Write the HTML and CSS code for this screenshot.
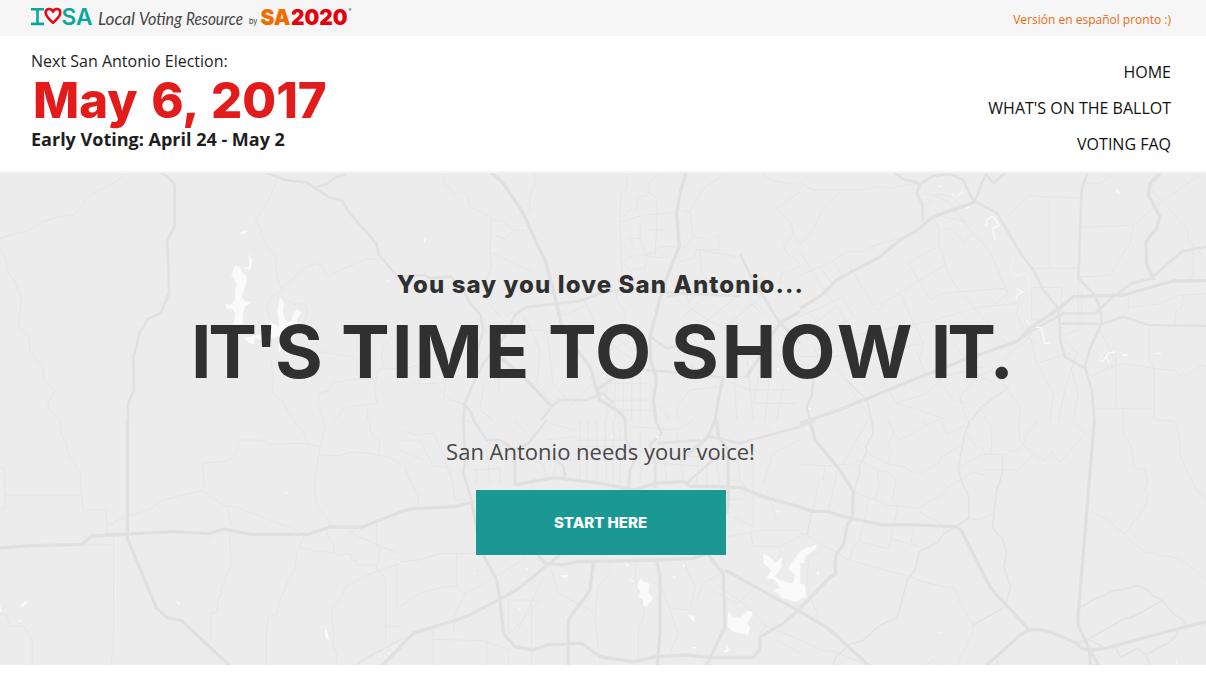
FILE: index.html
```html
<!DOCTYPE html>
<html lang="en">
<head>
<meta charset="utf-8">
<title>I Love SA Local Voting Resource</title>
<link rel="stylesheet" href="styles.css">
</head>
<body>
<div class="topbar">
  <svg class="logo" viewBox="30 4 324 30" width="324" height="30" role="img" aria-label="I love SA Local Voting Resource by SA2020">
    <path class="logo-i" d="M31 10.300H44M37.500 10.300V24.900M31 24.900H44"/>
    <path class="logo-heart" d="M53 23.800C49 20 45.700 17.500 45.700 13.800C45.700 9.400 51 8.700 53 12.600C55 8.700 60.300 9.400 60.300 13.800C60.300 17.500 57 20 53 23.800Z"/>
    <text class="logo-sa" x="61.500" y="25.800" textLength="31" lengthAdjust="spacingAndGlyphs">SA</text>
    <text class="logo-script" x="98" y="25.800" textLength="37" lengthAdjust="spacingAndGlyphs">Local</text>
    <text class="logo-script" x="139" y="25.800" textLength="43" lengthAdjust="spacingAndGlyphs">Voting</text>
    <text class="logo-script" x="186" y="25.800" textLength="57" lengthAdjust="spacingAndGlyphs">Resource</text>
    <text class="logo-by" x="249" y="25.200" textLength="8.500" lengthAdjust="spacingAndGlyphs">by</text>
    <text class="logo-org" x="260.500" y="25.800" textLength="30" lengthAdjust="spacingAndGlyphs">SA</text>
    <text class="logo-year" x="291" y="25.800" textLength="56.500" lengthAdjust="spacingAndGlyphs">2020</text>
    <text class="logo-reg" x="348.500" y="13">®</text>
  </svg>
  <a class="lang">Versión en español pronto :)</a>
</div>
<header class="header">
  <div class="election">
    <div class="election-label">Next San Antonio Election:</div>
    <div class="election-date">May 6, 2017</div>
    <div class="election-early">Early Voting: April 24 - May 2</div>
  </div>
  <nav class="nav">
    <a>HOME</a>
    <a>WHAT'S ON THE BALLOT</a>
    <a>VOTING FAQ</a>
  </nav>
</header>
<main class="hero">
  <svg class="map" viewBox="0 173 1206 492" aria-hidden="true">
    <!-- north west -->
    <g transform="translate(0 170) scale(.33333)">
      <path class="street" d="M372 10L360 25L322 50L280 68L258 90L240 118L220 136L185 138L125 156L85 182L20 198L0 206M0 240L18 268L22 305L42 330L65 385L55 465L88 508L92 545L128 590L132 628L165 662L142 700L150 722L183 750M833 25L805 92L765 152L782 178L790 210L827 265L830 320L845 357L915 293L950 280L968 290L980 320L1098 266L1140 270M845 357L812 385L800 418L812 450M845 380L880 402L915 402L922 435L900 470M812 570L820 610L818 670L843 690L880 750M960 545L1060 560L1075 575M970 750L953 700L957 670L985 662L1000 638L1060 628L1125 625M1135 598L1200 595M1135 598L1122 660L1132 700L1030 712L1020 735L995 750M1180 498L1150 530L1145 560L1152 595M1103 750L1103 715"/>
      <path class="road" d="M485 8L508 25L524 46V170L502 210L508 368L482 430L445 446L418 488L410 528L400 560L402 660L384 700V750M800 8L855 30L920 38L990 83L1025 90L1048 128L1130 222L1137 255L1195 322M948 52L980 42L1010 20L1040 12"/>
      <path class="water" d="M706 286L718 290L725 306L740 318L736 350L724 380L735 394L757 395L735 410L728 430L728 462L700 465L706 430L696 416L680 416L678 402L690 405L706 390L704 365L710 345L700 320L693 318ZM746 250L757 272L750 300L728 292L748 292ZM840 380L852 400L848 430L860 458L875 452L878 432L892 416L906 430L892 445L890 470L850 540L835 545L840 500L780 510L765 500L760 525L728 505L785 492L810 455L838 470L832 420ZM720 192L733 182L742 184L730 192ZM1156 333L1168 331L1166 336Z"/>
    </g>
    <!-- north -->
    <g transform="translate(400 170) scale(.33333)">
      <path class="street" d="M128 10L132 38L165 72L190 68L205 82L208 110L240 125L275 142L270 245L275 290L250 350M405 10L405 40L388 80L390 128M275 150L305 152L345 182L375 180M345 182L312 205L285 195M275 248L340 280L395 305M680 10V55L662 72L660 150L664 280L670 330M662 155L730 135L830 128M672 140L685 120L710 120L715 78L735 80L752 65L742 45L775 15M740 66L768 80L772 128L765 260M668 275L710 252L765 262L800 262M668 275L690 300L735 295L740 265M700 225L690 205L720 205L738 255L765 245L780 230L830 230M720 205V160M970 15L910 55L870 125L850 122M870 125L880 200L850 235M880 200L935 208L955 195L957 240L890 238L885 262L840 275M890 238L1020 262L1040 285L1052 318L1090 330L1140 338L1145 310L1200 290M1085 10L1115 30L1160 40L1200 38M1200 65L1130 115L1175 165L1180 195L1150 225L1160 250L1200 280M1180 195L1200 220M898 240L905 300L950 380M280 355L270 405L300 440M640 345L655 400L680 430L672 448M640 345L555 392L580 450M780 330L830 390L910 440L980 480M810 300L870 400M850 440L950 350L1010 345M900 470L1010 380L1090 320M940 500L1080 385M860 400L930 330M980 480L1050 400L1090 430M1010 345L1110 440M745 180L800 180M315 440L345 420L375 450M240 450L300 560L295 660M370 430L420 540L410 640L460 710M120 655L150 690L190 700M0 600L45 588L100 625M390 480H440L460 640L500 690M500 720L620 600M620 560V750M645 590V750M670 590V750M695 590V750M720 600V750M600 690H750M620 720L760 720M600 640L740 640M770 700L810 750M830 710L870 660L960 650M830 710L835 750M870 590L1050 660L1180 660M860 620H1050M1000 560L1010 750M1040 560L1060 750M1080 600L1060 700L1190 700M1110 600L1095 750M1150 640L1130 750M250 650L240 720L280 750M630 520L700 570M610 550L690 510M650 500L700 545M450 460L480 440L550 410M40 640H110M140 600L130 690M1120 560L1200 540M1090 530L1150 560"/>
      <path class="road" d="M0 318L75 315L90 325L152 320L188 355L210 400L242 435L250 480L225 570M375 412L345 435L320 490L250 580L220 640L195 700L190 750M375 412L540 393L600 370L700 355L830 370L1020 378M750 500L800 535L850 525M730 600L800 605L960 622M640 700L610 670L560 690L480 690L455 710L425 750M190 700L212 725L222 752M1020 250L1052 318L1140 460M800 380L830 375"/>
      <path class="highway" d="M275 8L310 40L370 130L410 220L435 270L460 360L485 465L535 545L570 590L590 660L600 690L650 720L675 745V755M858 8L840 70L830 130L838 230L805 310L782 380L750 500L752 570L770 630L760 690L768 752M970 620L955 690L945 752M1040 620L1080 560L1110 500L1145 455L1200 425M590 660L640 625M1140 460L1200 520M300 560L390 640L455 710"/>
      <path class="water" d="M70 210L75 205L77 212L73 218ZM1128 600L1138 590L1136 604Z"/>
    </g>
    <!-- north east -->
    <g transform="translate(800 170) scale(.33333)">
      <path class="street" d="M0 38L40 60H190L232 48L265 55L350 40M125 62L65 125L40 178L0 225M0 245L60 340L130 440L150 510M0 315L60 290L100 272L140 245L185 245L235 222L300 205L340 185M100 272L128 320M150 290L230 422L248 410L245 400L300 368L410 300L438 282M60 290L100 345M300 368L370 520L360 560M325 280L415 228L425 238L440 300L465 345L550 445L620 520M325 280L390 388L430 370L610 355L625 370L580 405M0 440L130 380L160 440L100 480M30 470L110 410M30 430L80 490M150 500L240 480L385 455L490 425L540 412L655 400L680 410M415 228L418 182L400 140M425 180L450 175L490 215L520 190L570 245L610 340L625 370M520 190L470 130L450 110M370 70L400 75L445 95L500 160M430 140L500 155M375 110L410 72L460 80L490 120M610 150L685 76L715 80L835 83M748 83V292M700 295L833 295M695 352H785V440M695 352V450H760M845 172L950 168L1000 165L1085 95L1205 10M1000 165L990 220L950 280L935 312L895 320H835M1085 10L1050 55L1160 175L1165 210L1205 255M1180 220V320L1160 332M850 40L900 42L940 12M985 380V420M985 412L1075 402L1140 375L1218 372M1125 460V425L1145 415L1150 375M1048 475V570L1062 600V750M948 545V710M885 715H1062M970 710V750M885 610L910 605L965 580L1080 598L1120 600L1150 622L1185 600L1200 585L1218 590M900 480L925 530L948 580L870 620M780 500L830 545L850 570M690 500L710 580L810 550M710 580L760 670L750 750M830 550L800 640L775 750M810 590L835 670L820 750M610 570L700 490M580 600L660 710V750M580 600L530 620L480 680L500 750M430 560L410 620L460 690L500 700M350 540L370 600L420 650M240 620L290 700L360 720L440 750M290 700L380 670L430 620L550 590M460 520L540 620L620 650M30 600L90 560L200 550L370 520M110 590L160 670L215 750M0 560L50 560M40 530L70 590M655 400L650 430L670 480L710 530M835 320V480L780 500M845 360V480M540 710L560 750"/>
      <path class="minor" d="M862 10L845 60L835 325M515 750L545 710L625 652M140 630L200 690L215 750"/>
      <path class="road" d="M360 42L350 70L368 105V155M360 42L400 18L450 12L490 30L505 65L525 95M525 95L545 40L560 10M555 10L580 38L615 10M285 8L310 28L345 35L365 50M862 10L845 60L835 325L880 370L900 410L905 460L870 535L855 590L875 660L883 750M525 95L590 128L665 255L700 300L730 360L775 415L780 470V510L795 560L855 595M650 515L700 480L790 430H885L940 380L995 340L1055 325L1145 245L1218 230M780 460L905 462L970 440L1045 465L1218 468M40 630L35 680L20 710L30 750"/>
      <path class="highway" d="M1080 10L1050 40L1045 75L1080 140L1070 175L1038 215L1040 285L1062 330M0 415L65 375L110 330L240 260L300 210L345 185L400 140L500 105L525 95M0 760L130 715L350 625L490 570L650 515L690 475L770 420L820 380L970 375L1120 333L1218 332"/>
      <path class="shore" d="M558 168L562 148L578 138L598 165L578 175L585 210M650 355L670 370M648 388L652 375L670 365M678 450L690 463M708 472H724L728 495L735 520H748M898 570L908 575L925 550L948 545M918 560L928 578M965 555H983M1066 550H1083M948 60L958 70M456 70L464 82M470 78L490 66M496 116L510 110M417 48H423M26 716H33"/>
      <path class="creek" d="M628 260L642 265L632 300L645 318L675 310L687 320L685 355L665 370M670 405L676 413M880 530L905 555L898 570"/>
    </g>
    <!-- south west -->
    <g transform="translate(0 420) scale(.33333)">
      <path class="street" d="M182 0V38L196 65L207 108L222 120L228 143L240 158L247 255L252 270H318L321 340M0 142H14L15 265L0 268M15 227H245M318 312H338L345 303L450 267L485 243L540 227L605 212L612 195L608 130L683 123L713 98L715 65L720 60H790L803 73L910 70L960 80M880 0L912 42L923 72M605 212L670 255L710 262L915 340M685 260L688 300L693 305V320M690 335L693 435L665 505V528L653 532V575L632 580V670M245 373H340M341 350L340 690L332 735M912 345L890 405L884 450L865 480L835 555L832 583L805 590L798 650L800 735M900 386L935 387L940 393L1005 397L1020 408L1035 400L1053 405L1055 420L1068 423L1073 435H1130L1128 448L1157 475V670M980 330L985 350L1000 370L1005 395M1040 328L1075 350L1200 403M1137 380V425L1128 440M1200 430L1130 455L1090 470L1035 502L1022 535L995 568V600L1000 625V680L1010 700V735M960 105L1015 107L1050 97L1090 97L1130 105L1170 112L1200 130M1110 0V30L1125 55L1140 62L1136 105M970 0L975 20L960 85L945 175V240L960 270L990 305V320M0 583L18 585L30 618H65L80 630L96 660V735M1130 310V380M1158 620H1200M1190 430V565"/>
      <path class="minor" d="M1070 735L1105 710L1200 660"/>
      <path class="highway" d="M382 0V355L470 565L502 593L545 602L690 738M0 384L95 377L247 373L275 348L385 342L520 335L628 341L672 327L752 343H922L990 321H1085L1203 276M1143 740L1203 680"/>
      <path class="water" d="M974 622L982 635L988 658H978ZM62 562L66 550L82 544L83 550ZM525 540L545 553L534 552ZM855 212L863 220L858 222ZM638 367L646 365L645 371ZM0 555L6 575L0 575ZM52 602L64 600L61 605ZM958 619L969 620L963 623ZM1136 706L1143 708L1139 712ZM1160 697H1168V703Z"/>
    </g>
    <!-- south -->
    <g transform="translate(400 420) scale(.33333)">
      <path class="street" d="M0 30L50 45L100 40L130 100L150 170M0 60H60L100 140H150L165 240H200M15 140L30 185L55 225V270M0 425L60 420L120 400H225M170 400V500H135L60 518L0 560M170 500L195 520L290 470L380 410M200 515L165 580L160 640M325 640V540L420 540L360 610L330 640M430 470L350 640M395 540V735M450 440L475 520L580 575M630 430V460L595 500L585 590L600 735M710 420L705 480L735 580L715 630V735M780 490L835 640L810 700M850 430L885 500L870 570L810 565M980 450L910 490L890 540M930 510L1015 550L1055 510M960 500L1060 575L1100 615L1080 640M0 660L100 620M100 630V735M100 658L250 662L330 690M260 660V735M325 690V735M985 350L1090 330L1200 330M1050 330L1060 380H1140V430L1110 490M1140 380L1200 350M1000 290L1060 320M1200 60L1120 100L1090 190M1010 80L1020 180M1060 70V320M1100 210L1130 300M985 180H1020L1040 210L1030 235L985 240M220 150L300 145V190M230 190V150M260 90L270 190M200 0L250 30M340 0L380 40M350 110L430 130L440 180M500 120H680M500 100H640M520 60H700M530 80H700M540 0V180M565 0L560 190M590 0V190M615 0L620 180M640 0V190M660 20V190M720 40V190M780 90L860 110H980M780 130L920 140M790 70L800 190M830 40L850 180M900 60L890 190M920 130V200M940 80L960 190M700 20L830 30L880 0M440 60L530 50M480 80L460 170M450 10L520 30M0 90L70 120M1080 610L1200 660M1200 700L1130 660M400 170L395 205"/>
      <path class="road" d="M190 0L195 120L190 160L215 240M220 0L260 60H300L345 90V190M440 0L385 70L350 85M460 110L490 140L495 170M675 0L678 60L710 110L690 150L685 210M765 0L785 40L750 75L765 130V205M770 70L900 60M860 190L950 110M930 50L1020 70L1200 20"/>
      <path class="highway" d="M0 277L30 267L165 260L225 245M340 195L465 173L605 190L700 210L770 190L850 185L870 198L1020 202L1090 230L1203 262M945 0L925 50L860 105M950 0L955 50L985 90V240L980 280M215 245L235 350L250 405L290 480L300 540L310 640L345 680L400 690L440 675L545 670L600 710L700 726L770 710L860 705L920 712H1060L1080 690V650L1150 610L1200 568M410 400L435 430L490 435L530 425L770 420L880 415L925 400M480 405L350 510L200 590L40 640L0 680M580 430L570 510L505 600V735M770 425L780 470V640L772 735M925 405L970 460L975 620L920 735M975 450L1200 575"/>
      <path class="water" d="M1090 402L1110 410L1125 430L1145 410V440L1125 470L1140 480L1165 488L1180 490L1185 465L1165 445L1180 420L1201 395V540L1185 545L1150 535L1120 510L1140 505L1125 480L1100 475L1115 450L1090 430ZM720 475L733 487L748 490L745 520L760 535L740 560L728 558L730 540L712 530L722 515L712 500ZM985 572L995 588L1020 595L1040 575L1058 573L1055 590L1040 610L1050 620L1045 645L1000 635L982 620ZM863 582L884 590L883 606L872 598ZM675 430L688 434L684 442ZM685 478L702 482L700 488ZM480 466L505 464L500 473L486 472ZM378 443L384 445L381 454ZM365 474L373 476L370 480ZM352 566L366 566L360 571ZM815 472L828 468L826 474ZM872 682L892 680L886 686ZM966 694L980 690L978 670L987 690L980 698ZM1128 272L1138 272L1134 280ZM629 45L642 48L637 54ZM1118 14L1128 15L1122 20ZM188 619L196 620L192 623ZM848 430L856 438L850 442ZM220 454L227 462L223 463ZM768 48L777 48L772 58Z"/>
    </g>
    <!-- south east -->
    <g transform="translate(800 420) scale(.33333)">
      <path class="street" d="M205 0L160 75L130 130M0 132L75 138L155 132L180 122L235 150L270 158L288 180L277 240L295 257M160 75L260 130L320 143L328 153L358 162L420 128V113L487 75M265 0L282 42L300 60L375 18L415 0M365 0L375 18M425 0L440 42L500 15M282 42L262 80L278 95L262 128M75 138L70 178H58L38 270M113 150L85 270M235 150L232 180L240 190L225 235M162 215L205 233L240 243L255 257H295L355 265L438 218V205L480 180L520 155L550 165L555 150H655L700 102L732 122L758 95L762 112L782 126L855 40L880 60M480 140L545 103H620L632 93L655 90L670 72L680 42L715 0M670 75L700 100M815 0L855 38M655 0L660 60M560 0L573 15L575 100M500 42L530 80L545 82L555 100M208 235L178 365L160 378L150 420M178 365L265 386L295 257M275 357L358 380M343 320L332 370M355 265L365 280L425 312L432 340M505 295L535 300L580 280M0 340L22 345L60 372L100 392L150 422L330 470L365 485L465 507L478 530L475 540L520 615V635L470 735M970 0V50L985 60L998 95L1002 140L1015 150L1033 145L1042 180L1035 210L1045 225L1038 255L1012 297L1005 297L975 345M1070 0L1120 2L1130 20L1140 70V105L1170 170L1190 210L1218 235M865 270L930 302L950 325L965 333L1000 370L1040 398H1058L1080 408H1112L1160 430L1218 478M60 372V395L25 408L22 480L30 530L52 580V600M0 660L70 692L105 695L210 738M380 735L400 718L415 735"/>
      <path class="minor" d="M215 0L220 40L198 80L200 95L178 140V165L162 215M510 0L492 50L475 140L482 178L507 232V295L432 342L412 368L358 395L345 450L322 480L292 593L240 615L188 662L150 672L108 710L98 735M608 105V150L600 185L590 210L577 322L608 358L620 395L612 440L632 500L618 555L605 567L520 615M35 280L20 345M840 563L890 533L915 525L940 512L970 508L1015 497L1040 507L1055 525L1088 543L1120 582L1150 600L1155 615M1085 543L1000 590L965 600L865 658M828 668L865 658L915 685M945 680L963 712L1012 684L1038 705L1052 735M1038 705L1105 668L1125 650L1135 630M585 715L598 735"/>
      <path class="highway" d="M0 260L35 274H82L120 287L155 295L250 315L320 314L465 320L483 330L570 500L595 532L615 550L687 630L655 650L560 735M687 630L710 628L750 635L830 670L845 685L875 690L915 685L1130 627L1218 605M30 0L45 60L120 150L160 215L157 295L143 310L130 375L108 402L105 440L108 462L90 472L0 565M0 575L80 622L140 675L205 735M883 0L833 605L838 625L860 670L895 735M868 690L872 735M0 18L45 0"/>
      <path class="water" d="M50 370L48 385L28 402L15 408L12 430H-1V395L20 382L35 382ZM-1 430V535L18 532L15 495L0 490ZM48 458L58 454L55 466ZM18 20L27 28L24 32ZM418 636L428 637L422 640ZM1125 718L1133 726L1130 731Z"/>
    </g>
  </svg>
  <div class="hero-copy">
    <h2 class="tagline">You say you love San Antonio...</h2>
    <h1 class="headline"><span class="w-its">IT'S</span> <span class="w-time">TIME</span> <span class="w-to">TO</span> <span class="w-show">SHOW</span> <span class="w-it">IT.</span></h1>
    <p class="lead">San Antonio needs your voice!</p>
    <a class="cta">START HERE</a>
  </div>
</main>
</body>
</html>
```
FILE: styles.css
```css
* { box-sizing: border-box; }
body {
  margin: 0;
  height: 679px;
  overflow: hidden;
  background: #fff;
  color: #1e1e1e;
  font-family: "Open Sans", sans-serif;
}
.topbar {
  display: flex;
  justify-content: space-between;
  align-items: center;
  height: 36px;
  padding: 0 35px 0 30px;
  background: #f6f6f6;
}
.logo { display: block; }
.logo text { font-family: Inter, sans-serif; }
.logo-i { fill: none; stroke: #0ba79d; stroke-width: 2.600; }
.logo-heart { fill: none; stroke: #e20a17; stroke-width: 2.600; stroke-linejoin: round; }
.logo .logo-sa { font-size: 22.500px; font-weight: 600; fill: #0ba79d; }
.logo .logo-script { font-family: Lato, sans-serif; font-style: italic; font-size: 18px; fill: #444; }
.logo .logo-by { font-size: 8px; fill: #444; }
.logo .logo-org, .logo .logo-year { font-size: 22px; font-weight: 900; }
.logo .logo-org { fill: #f06c00; }
.logo .logo-year { fill: #e5000f; }
.logo .logo-reg { font-size: 4.500px; fill: #555; }
.lang { font-size: 12px; line-height: 16px; color: #ec6a10; padding-top: 3px; }
.header {
  display: flex;
  justify-content: space-between;
  height: 137px;
  padding: 14px 35px 0 31px;
  border-bottom: 2px solid #f4f4f4;
}
.election-label { margin-bottom: 3px; font-size: 16px; line-height: 22px; white-space: nowrap; }
.election-date {
  padding-left: 2px;
  font: 800 49px/52px Inter, sans-serif;
  word-spacing: 3px;
  color: #e31b1b;
  white-space: nowrap;
}
.election-early { font-size: 18px; font-weight: 700; line-height: 24px; white-space: nowrap; }
.nav { display: flex; flex-direction: column; align-items: flex-end; padding-top: 4px; }
.nav a { font-size: 16px; line-height: 36px; color: #111; }
.hero { position: relative; height: 492px; background: #ececec; overflow: hidden; }
.map { position: absolute; inset: 0; width: 1206px; height: 492px; }
.map path { fill: none; stroke-linejoin: round; }
.map .street { stroke: #e5e5e5; stroke-width: 3; }
.map .minor { stroke: #e3e3e3; stroke-width: 5; }
.map .road { stroke: #e1e1e1; stroke-width: 8; }
.map .highway { stroke: #e0e0e0; stroke-width: 10; }
.map .water { fill: #fafafa; }
.map .shore { stroke: #fafafa; stroke-width: 4; }
.map .creek { stroke: #f3f3f3; stroke-width: 3; }
.hero-copy {
  position: relative;
  display: flex;
  flex-direction: column;
  align-items: center;
  padding: 95px 5px 0 0;
}
.tagline {
  margin: 0;
  font: 800 24px/34px Inter, sans-serif;
  letter-spacing: 1.100px;
  color: #303030;
  white-space: nowrap;
}
.headline {
  margin: 6px 0 0;
  font: 700 73px/88px Inter, sans-serif;
  color: #303030;
  white-space: nowrap;
}
.w-its { letter-spacing: -3.300px; }
.w-time { margin-left: 4px; letter-spacing: 2.300px; }
.w-to { margin-left: -1px; letter-spacing: .500px; }
.w-show { margin-left: 2px; letter-spacing: 3px; }
.w-it { margin-left: -2px; letter-spacing: -4px; }
.lead { margin: 40px 0 0; font-size: 22px; line-height: 30px; color: #484848; }
.cta {
  display: flex;
  align-items: center;
  justify-content: center;
  width: 250px;
  height: 65px;
  margin-top: 24px;
  background: #1c9894;
  color: #fff;
  font: 800 15px/20px Inter, sans-serif;
}
```
